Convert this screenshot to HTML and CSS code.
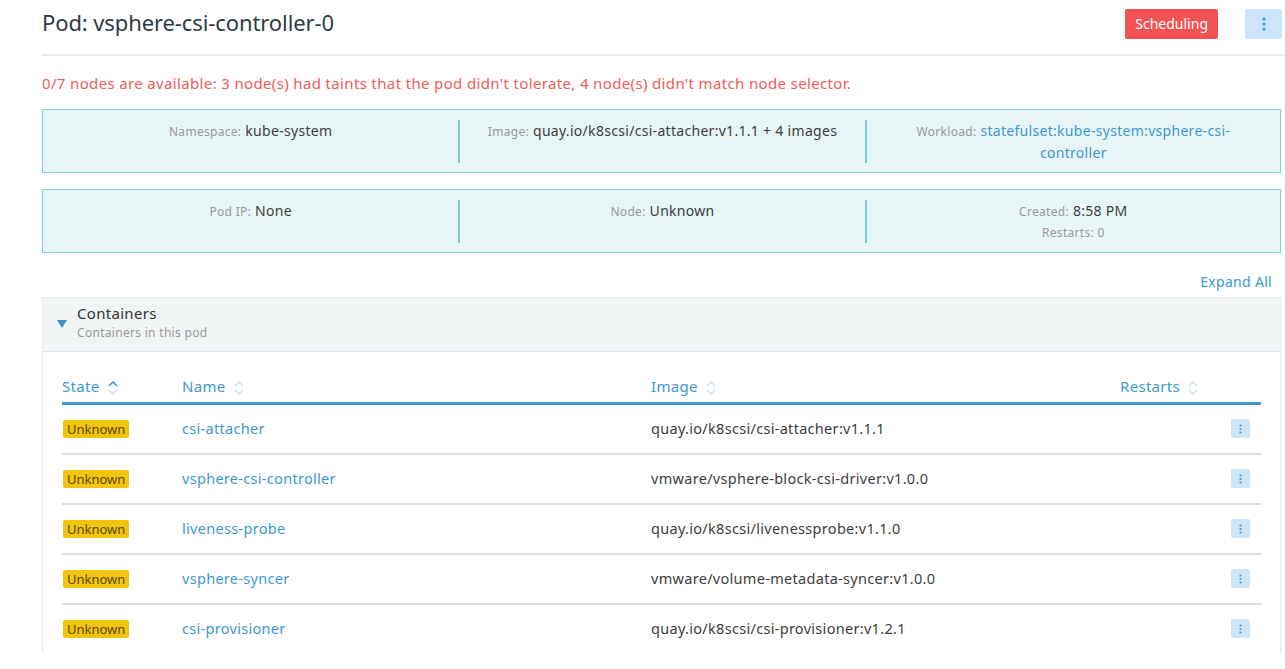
FILE: index.html
```html
<!DOCTYPE html>
<html lang="en">
<head>
  <meta charset="UTF-8" />
  <meta name="viewport" content="width=device-width, initial-scale=1.0" />
  <title>Pod: vsphere-csi-controller-0</title>
  <link rel="stylesheet" href="styles.css">
</head>
<body>
  <div class="page">
    <div class="header">
      <h1 class="title">Pod: vsphere-csi-controller-0</h1>
      <div class="header-actions">
        <span class="state-btn">Scheduling</span>
        <button class="kebab kebab-lg" aria-label="More actions">
          <svg width="4" height="14" viewBox="0 0 4 14"><circle cx="2" cy="2" r="1.5"/><circle cx="2" cy="7" r="1.5"/><circle cx="2" cy="12" r="1.5"/></svg>
        </button>
      </div>
    </div>

    <p class="error">0/7 nodes are available: 3 node(s) had taints that the pod didn't tolerate, 4 node(s) didn't match node selector.</p>

    <div class="info-box">
      <div class="info-cell"><span class="label">Namespace:</span> <span class="value">kube-system</span></div>
      <div class="info-cell"><span class="label">Image:</span> <span class="value">quay.io/k8scsi/csi-attacher:v1.1.1 + 4 images</span></div>
      <div class="info-cell workload"><span class="label">Workload:</span> <a class="link" href="#">statefulset:kube-system:vsphere-csi-controller</a></div>
    </div>

    <div class="info-box">
      <div class="info-cell"><span class="label">Pod IP:</span> <span class="value">None</span></div>
      <div class="info-cell"><span class="label">Node:</span> <span class="value">Unknown</span></div>
      <div class="info-cell">
        <span class="label">Created:</span> <span class="value">8:58 PM</span>
        <div class="sub">Restarts: 0</div>
      </div>
    </div>

    <div class="expand-row"><a class="link" href="#">Expand All</a></div>

    <div class="accordion">
      <div class="acc-head">
        <span class="caret"></span>
        <div>
          <div class="acc-title">Containers</div>
          <div class="acc-sub">Containers in this pod</div>
        </div>
      </div>
      <div class="acc-body">
        <table class="grid">
          <thead>
            <tr>
              <th class="col-state">State <span class="sort sort-up"><svg width="10" height="16" viewBox="0 0 10 16"><path d="M1 6l4-4 4 4" /><path d="M1 10l4 4 4-4" class="off"/></svg></span></th>
              <th class="col-name">Name <span class="sort"><svg width="10" height="16" viewBox="0 0 10 16"><path d="M1 6l4-4 4 4" class="off"/><path d="M1 10l4 4 4-4" class="off"/></svg></span></th>
              <th class="col-image">Image <span class="sort"><svg width="10" height="16" viewBox="0 0 10 16"><path d="M1 6l4-4 4 4" class="off"/><path d="M1 10l4 4 4-4" class="off"/></svg></span></th>
              <th class="col-restarts">Restarts <span class="sort"><svg width="10" height="16" viewBox="0 0 10 16"><path d="M1 6l4-4 4 4" class="off"/><path d="M1 10l4 4 4-4" class="off"/></svg></span></th>
              <th class="col-act"></th>
            </tr>
          </thead>
          <tbody>
            <tr>
              <td><span class="badge">Unknown</span></td>
              <td><a class="link" href="#">csi-attacher</a></td>
              <td>quay.io/k8scsi/csi-attacher:v1.1.1</td>
              <td></td>
              <td class="act"><button class="kebab" aria-label="Actions"><svg width="3" height="10" viewBox="0 0 3 10"><circle cx="1.5" cy="1.5" r="1.1"/><circle cx="1.5" cy="5" r="1.1"/><circle cx="1.5" cy="8.5" r="1.1"/></svg></button></td>
            </tr>
            <tr>
              <td><span class="badge">Unknown</span></td>
              <td><a class="link" href="#">vsphere-csi-controller</a></td>
              <td>vmware/vsphere-block-csi-driver:v1.0.0</td>
              <td></td>
              <td class="act"><button class="kebab" aria-label="Actions"><svg width="3" height="10" viewBox="0 0 3 10"><circle cx="1.5" cy="1.5" r="1.1"/><circle cx="1.5" cy="5" r="1.1"/><circle cx="1.5" cy="8.5" r="1.1"/></svg></button></td>
            </tr>
            <tr>
              <td><span class="badge">Unknown</span></td>
              <td><a class="link" href="#">liveness-probe</a></td>
              <td>quay.io/k8scsi/livenessprobe:v1.1.0</td>
              <td></td>
              <td class="act"><button class="kebab" aria-label="Actions"><svg width="3" height="10" viewBox="0 0 3 10"><circle cx="1.5" cy="1.5" r="1.1"/><circle cx="1.5" cy="5" r="1.1"/><circle cx="1.5" cy="8.5" r="1.1"/></svg></button></td>
            </tr>
            <tr>
              <td><span class="badge">Unknown</span></td>
              <td><a class="link" href="#">vsphere-syncer</a></td>
              <td>vmware/volume-metadata-syncer:v1.0.0</td>
              <td></td>
              <td class="act"><button class="kebab" aria-label="Actions"><svg width="3" height="10" viewBox="0 0 3 10"><circle cx="1.5" cy="1.5" r="1.1"/><circle cx="1.5" cy="5" r="1.1"/><circle cx="1.5" cy="8.5" r="1.1"/></svg></button></td>
            </tr>
            <tr>
              <td><span class="badge">Unknown</span></td>
              <td><a class="link" href="#">csi-provisioner</a></td>
              <td>quay.io/k8scsi/csi-provisioner:v1.2.1</td>
              <td></td>
              <td class="act"><button class="kebab" aria-label="Actions"><svg width="3" height="10" viewBox="0 0 3 10"><circle cx="1.5" cy="1.5" r="1.1"/><circle cx="1.5" cy="5" r="1.1"/><circle cx="1.5" cy="8.5" r="1.1"/></svg></button></td>
            </tr>
          </tbody>
        </table>
      </div>
    </div>
  </div>
</body>
</html>
```

FILE: styles.css
```css
body { margin: 0; background: #fff; font-family: "Noto Sans", "DejaVu Sans", sans-serif; color: #3d3d3d; font-size: 14px; letter-spacing: 0.3px; }
.page { padding: 0 4px 0 42px; }
a { text-decoration: none; }
.link { color: #3d98d3; }

/* header */
.header { display: flex; align-items: center; justify-content: space-between; height: 54px; border-bottom: 2px solid #e9edef; margin-right: -4px; padding-right: 3px; }
.title { margin: 0 0 10px; font-size: 22px; font-weight: 400; color: #2f3a45; letter-spacing: -0.1px; }
.header-actions { display: flex; align-items: center; gap: 27px; margin-bottom: 6px; }
.state-btn { display: inline-block; background: #f15354; color: #fff; font-size: 14px; letter-spacing: 0; height: 30px; line-height: 30px; padding: 0 10px; border-radius: 2px; }
.kebab { display: inline-flex; align-items: center; justify-content: center; border: none; padding: 0; background: #cee4f7; border-radius: 2px; cursor: pointer; width: 19px; height: 19px; }
.kebab svg { fill: #3d98d3; }
.kebab-lg { width: 37px; height: 30px; }

.error { color: #f15b5b; font-size: 15px; letter-spacing: 0.35px; margin: 17px 0 16px; }

/* info boxes */
.info-box { display: grid; grid-template-columns: 416fr 407fr 416fr; background: #e8f5f6; border: 1px solid #86d0d5; padding: 10px 0 9px; margin-bottom: 16px; min-height: 42px; }
.info-cell { text-align: center; font-size: 14px; line-height: 21px; padding: 0 16px; }
.info-cell + .info-cell { border-left: 2px solid #7ccdd1; }
.workload { padding: 0 42px; }
.label { color: #999; font-size: 12px; }
.value { color: #3d3d3d; }
.sub { color: #999; font-size: 12px; }

.expand-row { text-align: right; padding: 4px 9px 6px 0; font-size: 14px; line-height: 18px; }

/* accordion */
.accordion { border: 1px solid #e6e9eb; border-bottom: none; }
.acc-head { display: flex; align-items: center; gap: 10px; background: #f1f4f5; border-bottom: 1px solid #dde3e6; padding: 5px 14px 8px; }
.caret { width: 0; height: 0; border-left: 5px solid transparent; border-right: 5px solid transparent; border-top: 8px solid #3d8ed3; margin-top: 2px; }
.acc-title { font-size: 15px; line-height: 20px; color: #333; }
.acc-sub { font-size: 12px; color: #999; line-height: 20px; }
.acc-body { padding: 22px 19px 0; }

/* containers table */
.grid { width: 100%; border-collapse: collapse; }
.grid th { text-align: left; font-weight: 400; color: #3d98d3; font-size: 15px; padding: 2px 0 6px; border-bottom: 3px solid #3d98d3; white-space: nowrap; }
.sort { display: inline-block; vertical-align: middle; margin-left: 4px; }
.sort svg { fill: none; stroke: #3d98d3; stroke-width: 1.6; display: block; }
.sort svg .off { stroke: #c9e2f4; }
.col-state { width: 120px; }
.col-name { width: 469px; }
.col-image { width: 469px; }
.col-act { width: 30px; }
.grid td { height: 46px; border-bottom: 2px solid #dedede; font-size: 14.5px; padding: 0 0 2px; }
.grid tbody tr:last-child td { border-bottom: none; }
.badge { display: inline-block; background: #f1c40f; color: #5c4a00; font-size: 13px; letter-spacing: 0; line-height: 18px; padding: 0 4px; border-radius: 2px; margin-left: 1px; }
.act { text-align: right; padding-right: 11px !important; }
```
